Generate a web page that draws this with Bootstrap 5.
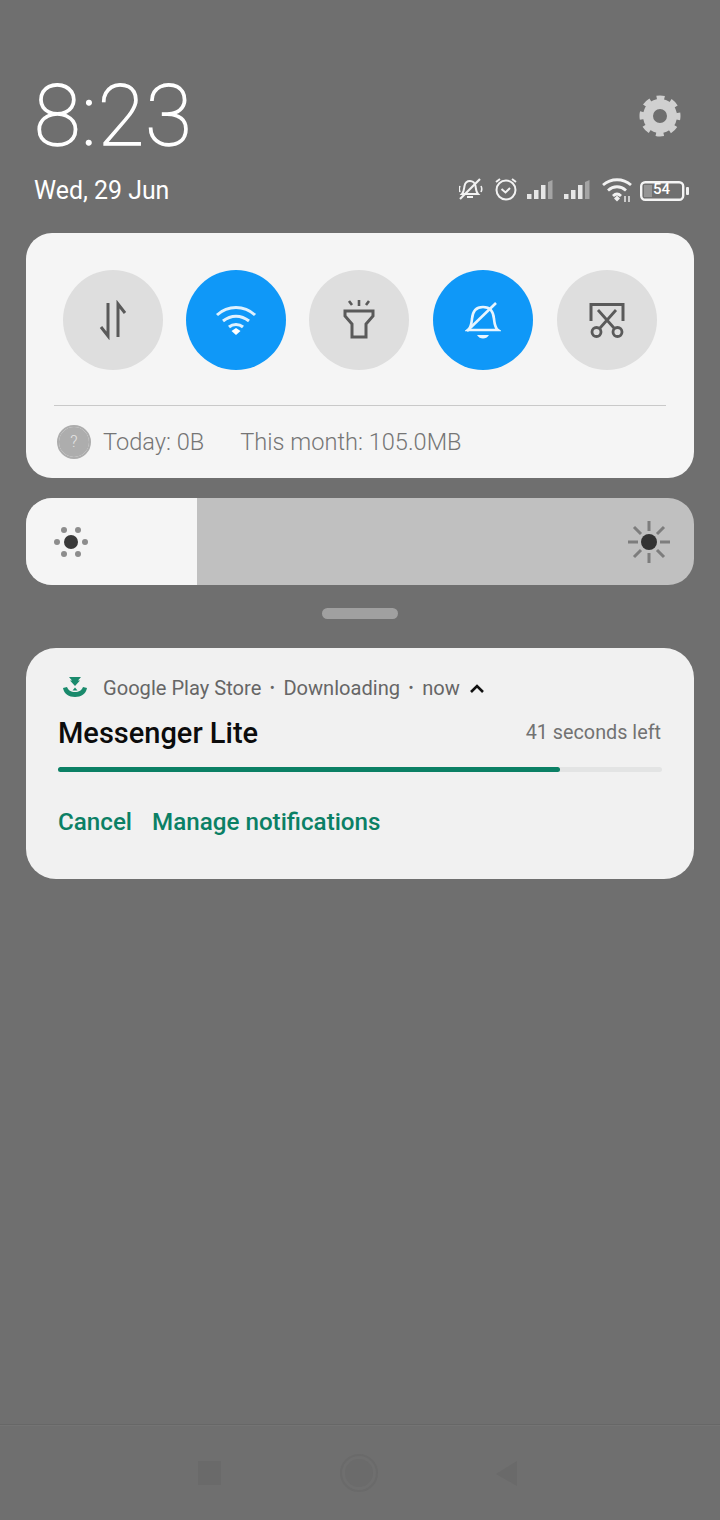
<!DOCTYPE html>
<html lang="en"><head><meta charset="utf-8"><title>Notification shade</title>
<link href="https://cdn.jsdelivr.net/npm/bootstrap@5.3.0/dist/css/bootstrap.min.css" rel="stylesheet">
<style>
html,body{height:100%}
body{background:#6f6f6f;font-family:Roboto,"Liberation Sans",sans-serif;width:720px;height:1520px;overflow:hidden}
.shade{height:1520px;padding:0 26px}
.head-a{height:153px;padding:76px 13px 0 8px}
.clock{font-family:Roboto,sans-serif;font-weight:100;font-size:85px;line-height:81px;color:#fff;letter-spacing:1px;-webkit-text-stroke:1.4px #fff}
.head-b{height:80px;padding:0 4px 0 8px}
.dateline{font-size:24.9px;line-height:30px;color:#fff;margin-top:23px}
.status{margin-top:21px}
.panel{background:#f5f5f5;border-radius:26px}
.toggles{height:245px;padding:37px 37px 0 37px}
.tog-row{gap:23.2px}
.tog{width:100px;height:100px;border-radius:50%;background:#dedede}
.tog.on{background:#0f98f8}
.tog-last{margin-left:auto}
.rule{border-top:1px solid #c9c9c9;margin:35px -9px 0 -9px}
.usage{margin:19px -6px 0 -6px;font-size:23.6px;font-weight:300;line-height:34px;color:#757575;gap:36px}
.qmark{width:34px;height:34px;border-radius:50%;background:#adadad;border:2px solid #f5f5f5;outline:2px solid #adadad;outline-offset:-2px;color:#e4e4e4;font-size:16px;line-height:30px;text-align:center;margin-right:12px}
.slide{margin-top:20px;height:87px;border-radius:26px;overflow:hidden;background:#c0c0c0}
.slide-fill{width:171px;background:#f5f5f5;padding-left:27px}
.slide-end{padding-right:23px}
.grip{width:76px;height:11px;border-radius:6px;background:#a0a0a0;margin:23px auto 29px}
.notice{background:#f1f1f1;border-radius:30px;height:231px;padding:25px 32px 0 32px}
.nt-head{font-size:20.1px;line-height:30px;color:#666;height:30px}
.nt-title{font-size:29px;font-weight:500;line-height:38px;color:#0c0c0c}
.nt-left{font-size:19.8px;color:#727272;padding-right:1px}
.nt-row{margin-top:11px}
.bar-track{height:5px;background:#e3e4e4;border-radius:3px;margin-top:15px}
.bar-fill{height:5px;background:#0b8065;border-radius:3px}
.nt-acts{margin-top:35px;font-size:24.2px;font-weight:500;line-height:30px;color:#0b8065;gap:20px}
.nt-sep{margin:0 8.500px;font-size:15px}
.navzone{position:absolute;left:0;top:1424px;width:720px;height:96px;border-top:1px solid #676767;box-shadow:inset 0 1px 0 #747474}
.navzone svg{position:absolute;top:28px}
</style></head>
<body>
<div class="shade">
  <div class="head-a d-flex justify-content-between align-items-start">
    <div class="clock">8:23</div>
    <svg width="42" height="42" viewBox="0 0 42 42" style="margin-top:19px" fill="none" stroke="#d0d0d0" aria-hidden="true"><circle cx="21" cy="21" r="12" stroke-width="10"/><circle cx="21" cy="21" r="17.500" stroke-width="6" stroke-dasharray="7.500 6.245" stroke-dashoffset="3.750"/></svg>
  </div>
  <div class="head-b d-flex justify-content-between align-items-start">
    <div class="dateline">Wed, 29 Jun</div>
    <div class="status d-flex align-items-center">
      <svg width="180" height="30" viewBox="6 0 180 30" fill="none" stroke="#f2f2f2" aria-hidden="true">
        <g stroke-width="2"><path d="M9 20c2-2 2-5 2.500-8 .6-3 3-5 5.500-5s5 2 5.500 5c.5 3 .5 6 2.500 8z"/><path d="M14 23h6"/><path d="M7 25 27 5" stroke-width="2.200"/><path d="M7 12c-1 2-1 4 0 6M28 12c1 2 1 4 0 6" stroke-width="1.600"/></g>
        <g stroke-width="2"><circle cx="53" cy="16" r="9.500"/><path d="M48.500 15l4 3.500 4.500-4.500"/><path d="M43 8l4-3M63 8l-4-3"/></g>
        <g stroke="none" fill="#e6e6e6"><path d="M74 25h4.500v-5H74zM81 25h4.500v-9H81zM88 25h4.500V11H88z"/><path d="M95 25h4.500V6L95 8z" fill="#a4a4a4"/></g>
        <g stroke="none" fill="#e6e6e6"><path d="M111 25h4.500v-5H111zM118 25h4.500v-9H118zM125 25h4.500V11H125z"/><path d="M132 25h4.500V6L132 8z" fill="#a4a4a4"/></g>
        <g stroke-width="2.800"><path d="M150 11c8-7 20-7 28 0M155 16.500c5.500-5 12.500-5 18 0M160 22c2.500-2.500 5.500-2.500 8 0"/></g>
        <path d="M161 24.500l3-3 3 3-3 3z" fill="#f0f0f0" stroke="none"/>
        <path d="M172 22v6M176 22v6" stroke-width="1.400"/>
      </svg>
      <div class="position-relative" style="width:50px;height:22px;margin-left:1px">
        <svg width="50" height="22" viewBox="0 0 50 22" aria-hidden="true"><rect x="1.200" y="2.200" width="42" height="17.600" rx="4" fill="none" stroke="#f4f4f4" stroke-width="2.400"/><rect x="4" y="5" width="8" height="12" fill="#949494"/><rect x="46" y="7" width="3" height="8" rx="1" fill="#f0f0f0"/></svg>
        <span class="position-absolute top-0 fw-medium text-white" style="left:13px;font-size:15px;line-height:22px">54</span>
      </div>
    </div>
  </div>

  <section class="panel toggles">
    <div class="tog-row d-flex">
      <div class="tog d-flex align-items-center justify-content-center"><svg width="36" height="40" viewBox="0 0 36 40" fill="none" stroke="#5a5a5a" stroke-width="3" aria-hidden="true"><path d="M13 3v33L6 27"/><path d="M23 37V4l7 9"/></svg></div>
      <div class="tog on d-flex align-items-center justify-content-center"><svg width="42" height="36" viewBox="0 0 42 36" fill="none" stroke="#dff1fe" stroke-width="3" aria-hidden="true"><path d="M2 13c11-10 27-10 38 0M8 19c8-6.500 18-6.500 26 0M14 25c4-3.500 10-3.500 14 0"/><path d="M16.500 29l4.500-3 4.500 3-4.500 4z" fill="#fff" stroke="none"/></svg></div>
      <div class="tog d-flex align-items-center justify-content-center"><svg width="34" height="42" viewBox="0 0 34 42" fill="none" stroke="#5a5a5a" stroke-width="3" aria-hidden="true"><path d="M3 12h28v5l-7 8v13H10V25l-7-8z"/><path d="M17 1v6M7 2l3 4M27 2l-3 4" stroke-width="2.600"/></svg></div>
      <div class="tog on d-flex align-items-center justify-content-center"><svg width="36" height="40" viewBox="0 0 36 40" fill="none" stroke="#e8f5fe" stroke-width="2.600" aria-hidden="true"><path d="M3 30h30c-3-2-3.500-6-4-11-.5-7-4-12-11-12S7.500 12 7 19c-.5 5-1 9-4 11z"/><path d="M12 35h12c-1.500 2.500-3.500 3.500-6 3.500s-4.500-1-6-3.500z" fill="#e8f5fe" stroke="none"/><path d="M2 31 31 3"/></svg></div>
      <div class="tog tog-last d-flex align-items-center justify-content-center"><svg width="38" height="36" viewBox="0 0 38 36" fill="none" stroke="#5a5a5a" aria-hidden="true"><path d="M3 19V2.500h32V19" stroke-width="3"/><path d="M10 8l16 18M28 8 12 26" stroke-width="2.800"/><circle cx="8.500" cy="30" r="4.500" stroke-width="2.800"/><circle cx="29.500" cy="30" r="4.500" stroke-width="2.800"/></svg></div>
    </div>
    <div class="rule"></div>
    <div class="usage d-flex align-items-center">
      <div class="d-flex align-items-center"><span class="qmark">?</span><span>Today: 0B</span></div>
      <span>This month: 105.0MB</span>
    </div>
  </section>

  <section class="slide d-flex">
    <div class="slide-fill d-flex align-items-center"><svg width="36" height="36" viewBox="0 0 36 36" aria-hidden="true"><circle cx="18" cy="18" r="7" fill="#3a3a3a"/><g fill="#8d8d8d"><circle cx="4" cy="18" r="3"/><circle cx="32" cy="18" r="3"/><circle cx="11" cy="6" r="3"/><circle cx="25" cy="6" r="3"/><circle cx="11" cy="30" r="3"/><circle cx="25" cy="30" r="3"/></g></svg></div>
    <div class="slide-end flex-grow-1 d-flex align-items-center justify-content-end"><svg width="44" height="44" viewBox="0 0 44 44" aria-hidden="true"><circle cx="22" cy="22" r="8" fill="#333"/><path d="M22 1v10M22 33v10M1 22h10M33 22h10M7 7l7 7M30 30l7 7M37 7l-7 7M14 30l-7 7" stroke="#7d7d7d" stroke-width="3"/></svg></div>
  </section>

  <div class="grip"></div>

  <section class="notice">
    <div class="nt-head d-flex align-items-center">
      <svg width="30" height="26" viewBox="0 0 30 26" aria-hidden="true" style="margin:0 13.500px 0 1.500px"><path d="M9 2h12l-3 3.500h2L15 11l-5-5.500h2z" fill="#1a8a6c"/><path d="M3 13c1 6 6 9 12 9s11-3 12-9l-4-1c-1 3-4 5-8 5s-7-2-8-5z" fill="#1a8a6c"/><path d="M12.500 15.500l2.500-3 2.500 3z" fill="#1a8a6c"/></svg>
      <span>Google Play Store</span><span class="nt-sep">•</span><span>Downloading</span><span class="nt-sep">•</span><span>now</span>
      <svg width="16" height="12" viewBox="0 0 16 12" fill="none" stroke="#111" stroke-width="2.600" aria-hidden="true" style="margin-left:9px"><path d="M2 10l6-6 6 6"/></svg>
    </div>
    <div class="nt-row d-flex justify-content-between align-items-center">
      <div class="nt-title">Messenger Lite</div>
      <div class="nt-left">41 seconds left</div>
    </div>
    <div class="bar-track"><div class="bar-fill" style="width:83.100%"></div></div>
    <div class="nt-acts d-flex"><span>Cancel</span><span>Manage notifications</span></div>
  </section>
</div>

<div class="navzone">
  <svg style="left:193px" width="32" height="40" viewBox="0 0 32 40" aria-hidden="true"><rect x="5" y="8" width="23" height="24" fill="#6a6a6a"/></svg>
  <svg style="left:338px" width="44" height="44" viewBox="0 0 44 44" aria-hidden="true"><circle cx="21" cy="20" r="14" fill="#6b6b6b"/><circle cx="21" cy="20" r="18" fill="none" stroke="#6a6a6a" stroke-width="2"/></svg>
  <svg style="left:490px" width="34" height="40" viewBox="0 0 34 40" aria-hidden="true"><path d="M27 8v25L6 21z" fill="#6a6a6a"/></svg>
</div>
</body></html>
